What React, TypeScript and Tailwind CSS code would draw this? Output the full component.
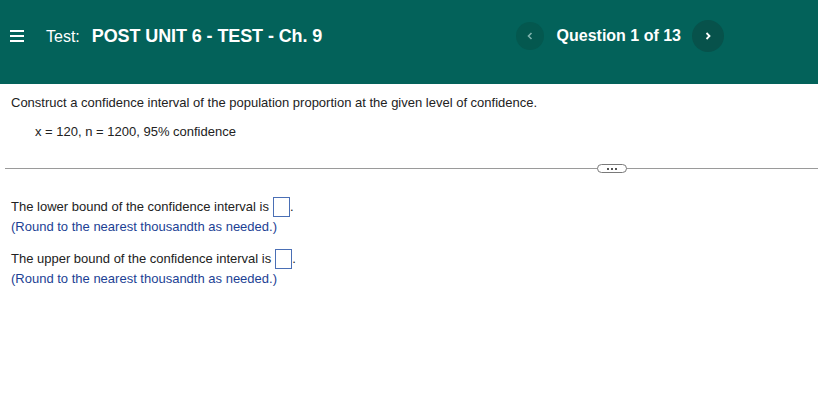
import React from "react";

export default function App() {
  return (
    <div className="w-[818px] h-[400px] bg-white overflow-hidden" style={{ fontFamily: '"Liberation Sans", Arial, sans-serif' }}>
      <header className="h-[84px] bg-[#03625a] text-white">
        <div className="h-[72px] flex items-center w-full">
          <div className="ml-[10px] w-[14px] flex flex-col gap-[3px]">
            <div className="h-[2px] bg-white" />
            <div className="h-[2px] bg-white" />
            <div className="h-[2px] bg-white" />
          </div>
          <div className="ml-[22px] flex items-baseline">
            <span className="text-[16px]">Test:</span>
            <span className="ml-[12px] font-bold text-[18px] tracking-[-0.1px]">POST UNIT 6 - TEST - Ch. 9</span>
          </div>
          <div className="ml-auto flex items-center">
            <div className="w-[28px] h-[28px] rounded-full bg-[#04584f] flex items-center justify-center">
              <svg width="8" height="10" viewBox="0 0 8 10"><path d="M5.5 2 L2.5 5 L5.5 8" stroke="#7fb3ad" strokeWidth="1.6" fill="none" /></svg>
            </div>
            <span className="ml-[13px] font-bold text-[16px]">Question 1 of 13</span>
            <div className="ml-[11px] w-[32px] h-[32px] rounded-full bg-[#07524b] flex items-center justify-center">
              <svg width="8" height="10" viewBox="0 0 8 10"><path d="M2.5 2 L5.5 5 L2.5 8" stroke="#ffffff" strokeWidth="1.8" fill="none" /></svg>
            </div>
            <div className="w-[94px]" />
          </div>
        </div>
      </header>
      <div className="pt-[11px] pl-[11px] text-[13px] text-[#222]">
        <p className="leading-[16px]">Construct a confidence interval of the population proportion at the given level of confidence.</p>
        <p className="mt-[13px] ml-[24px] leading-[16px]">x = 120, n = 1200, 95% confidence</p>
      </div>
      <div className="relative mt-[28px] ml-[5px] h-[1px] bg-[#9a9a9a]">
        <div className="absolute left-[592px] top-[-4px] w-[30px] h-[9px] rounded-full border border-[#7a7a7a] bg-white flex items-center justify-center gap-[2px]">
          <span className="w-[2px] h-[2px] bg-[#555]" />
          <span className="w-[2px] h-[2px] bg-[#555]" />
          <span className="w-[2px] h-[2px] bg-[#555]" />
        </div>
      </div>
      <div className="pl-[11px] pt-[28px] text-[13px]">
        <div className="flex items-center text-[#222] leading-[20px]">
          <span>The lower bound of the confidence interval is</span>
          <span className="ml-[4px] w-[17px] h-[20px] border border-[#4a6fb5] bg-white" />
          <span>.</span>
        </div>
        <div className="text-[#1c3f94] leading-[18px] mt-[1px]">(Round to the nearest thousandth as needed.)</div>
        <div className="mt-[13px] flex items-center text-[#222] leading-[20px]">
          <span>The upper bound of the confidence interval is</span>
          <span className="ml-[4px] w-[17px] h-[20px] border border-[#4a6fb5] bg-white" />
          <span>.</span>
        </div>
        <div className="text-[#1c3f94] leading-[18px] mt-[1px]">(Round to the nearest thousandth as needed.)</div>
      </div>
    </div>
  );
}
